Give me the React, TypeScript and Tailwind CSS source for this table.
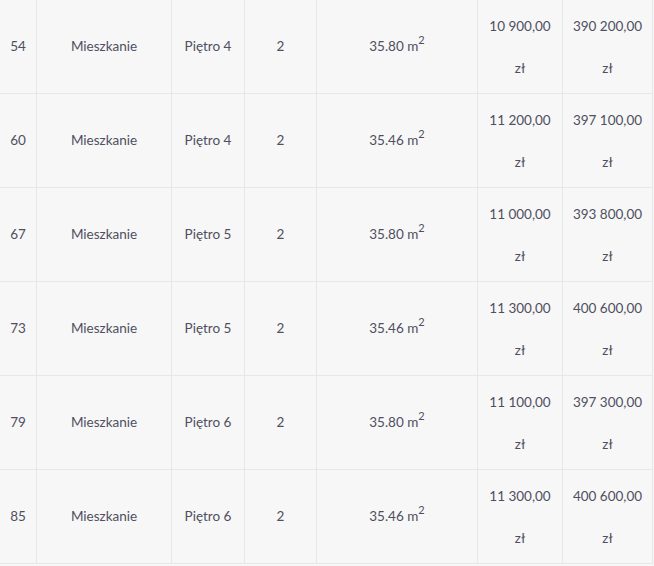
import React from "react";

type Row = { id: string; floor: string; area: string; ppm: string; price: string };

const rows: Row[] = [
  { id: "54", floor: "Piętro 4", area: "35.80", ppm: "10 900,00", price: "390 200,00" },
  { id: "60", floor: "Piętro 4", area: "35.46", ppm: "11 200,00", price: "397 100,00" },
  { id: "67", floor: "Piętro 5", area: "35.80", ppm: "11 000,00", price: "393 800,00" },
  { id: "73", floor: "Piętro 5", area: "35.46", ppm: "11 300,00", price: "400 600,00" },
  { id: "79", floor: "Piętro 6", area: "35.80", ppm: "11 100,00", price: "397 300,00" },
  { id: "85", floor: "Piętro 6", area: "35.46", ppm: "11 300,00", price: "400 600,00" },
];

const cell = "flex items-center justify-center border-r border-[#e7e7e7] text-center";

export default function App() {
  return (
    <div
      className="min-h-[566px] w-[654px] bg-[#f7f7f7] text-[13.5px] text-[#4f4f60]"
      style={{ fontFamily: "Lato, 'Noto Sans', sans-serif" }}
    >
      <div className="w-[653px]">
        {rows.map((r) => (
          <div key={r.id} className="flex h-[94px] border-b border-[#e7e7e7]">
            <div className={`${cell} w-[37px]`}>{r.id}</div>
            <div className={`${cell} w-[135px]`}>Mieszkanie</div>
            <div className={`${cell} w-[73px]`}>{r.floor}</div>
            <div className={`${cell} w-[72px]`}>2</div>
            <div className={`${cell} w-[161px]`}>
              <span>
                {r.area} m<sup className="text-[11px] top-[-0.65em]">2</sup>
              </span>
            </div>
            <div className={`${cell} w-[85px] flex-col leading-[42px]`}>
              <span>{r.ppm}</span>
              <span>zł</span>
            </div>
            <div className={`${cell} w-[90px] flex-col leading-[42px]`}>
              <span>{r.price}</span>
              <span>zł</span>
            </div>
          </div>
        ))}
      </div>
    </div>
  );
}
